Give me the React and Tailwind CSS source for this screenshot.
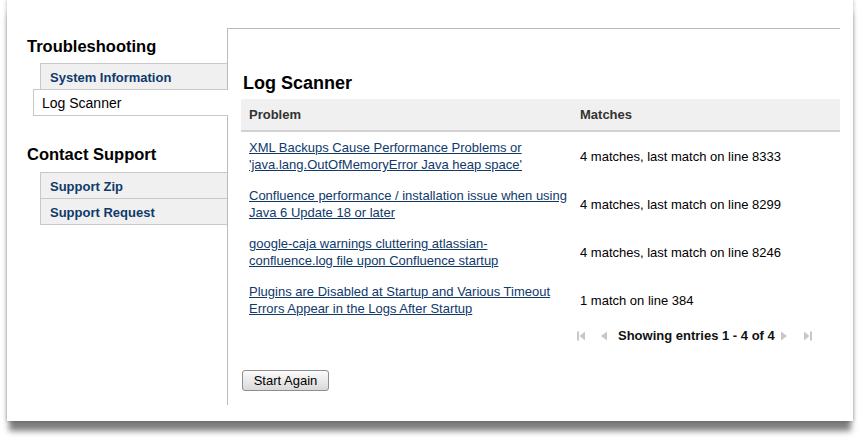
import React from "react";

const rows = [
  {
    title: "XML Backups Cause Performance Problems or 'java.lang.OutOfMemoryError Java heap space'",
    matches: "4 matches, last match on line 8333",
  },
  {
    title: "Confluence performance / installation issue when using Java 6 Update 18 or later",
    matches: "4 matches, last match on line 8299",
  },
  {
    title: "google-caja warnings cluttering atlassian-confluence.log file upon Confluence startup",
    matches: "4 matches, last match on line 8246",
  },
  {
    title: "Plugins are Disabled at Startup and Various Timeout Errors Appear in the Logs After Startup",
    matches: "1 match on line 384",
  },
];

function NavItem({ label, last }) {
  return (
    <div
      className={`ml-[33px] h-[26px] border-t border-l border-[#c8c8c8] bg-[#f0f0f0] pl-[9px] pt-[2px] text-[13px] leading-[23px] font-bold text-[#0f3a6b] ${
        last ? "h-[27px] border-b" : ""
      }`}
    >
      {label}
    </div>
  );
}

function PageIcon({ kind }) {
  const fill = "#c8c8c8";
  if (kind === "first")
    return (
      <svg width="8" height="10" viewBox="0 0 8 10">
        <rect x="0" y="0.5" width="2" height="9" fill={fill} />
        <polygon points="8,0.5 2.5,5 8,9.5" fill={fill} />
      </svg>
    );
  if (kind === "last")
    return (
      <svg width="8" height="10" viewBox="0 0 8 10">
        <polygon points="0,0.5 5.5,5 0,9.5" fill={fill} />
        <rect x="6" y="0.5" width="2" height="9" fill={fill} />
      </svg>
    );
  if (kind === "prev")
    return (
      <svg width="6" height="10" viewBox="0 0 6 10">
        <polygon points="6,0.5 0,5 6,9.5" fill={fill} />
      </svg>
    );
  return (
    <svg width="6" height="10" viewBox="0 0 6 10">
      <polygon points="0,0.5 6,5 0,9.5" fill={fill} />
    </svg>
  );
}

export default function App() {
  return (
    <div className="w-[865px] h-[445px] bg-white font-['Liberation_Sans',Arial,sans-serif] text-black">
      <div className="ml-[7px] w-[846px] h-[421px] bg-white flex shadow-[0_12px_6px_-2px_rgba(0,0,0,0.5),0_0_4px_rgba(0,0,0,0.3)]">
        {/* Sidebar */}
        <div className="w-[220px] shrink-0 pt-[36px]">
          <h3 className="pl-[20px] text-[16.5px] leading-[20px] font-bold">Troubleshooting</h3>
          <div className="mt-[7px]">
            <NavItem label="System Information" />
            <div className="relative z-10 ml-[26px] -mr-px h-[27px] border-t border-l border-b border-[#c8c8c8] bg-white pl-[8px] pt-[2px] text-[14px] leading-[23px]">
              Log Scanner
            </div>
          </div>
          <h3 className="mt-[28px] pl-[20px] text-[16.5px] leading-[20px] font-bold">Contact Support</h3>
          <div className="mt-[8px]">
            <NavItem label="Support Zip" />
            <NavItem label="Support Request" last />
          </div>
        </div>

        {/* Content */}
        <div className="mt-[28px] w-[613px] h-[377px] shrink-0 border-t border-l border-[#bcbcbc] pl-[13px] pt-[43px]">
          <h2 className="ml-[2px] text-[18px] leading-[22px] font-bold">Log Scanner</h2>
          <div className="mt-[5px] text-[13px]">
            <div className="grid grid-cols-[331px_1fr] h-[33px] bg-[#f0f0f0] border-b-2 border-[#d2d2d2] items-center font-bold text-[#333]">
              <div className="pl-[8px] leading-[16px]">Problem</div>
              <div className="pl-[8px] leading-[16px]">Matches</div>
            </div>
            {rows.map((r) => (
              <div key={r.matches + r.title} className="grid grid-cols-[331px_1fr] h-[48px] items-center">
                <div className="pl-[8px] pr-[4px] leading-[17px]">
                  <a href="#" className="text-[#0f3a6b] underline">
                    {r.title}
                  </a>
                </div>
                <div className="pl-[8px] leading-[17px]">{r.matches}</div>
              </div>
            ))}
            <div className="grid grid-cols-[331px_1fr] mt-[4px]">
              <div />
              <div className="flex items-center pl-[5px] h-[16px]">
                <PageIcon kind="first" />
                <span className="ml-[16px] flex">
                  <PageIcon kind="prev" />
                </span>
                <span className="ml-[11px] font-bold leading-[16px] text-[#111]">Showing entries 1 - 4 of 4</span>
                <span className="ml-[6px] flex">
                  <PageIcon kind="next" />
                </span>
                <span className="ml-[17px] flex">
                  <PageIcon kind="last" />
                </span>
              </div>
            </div>
            <button
              type="button"
              className="mt-[26px] ml-[1px] w-[87px] h-[21px] border border-[#8e8e8e] rounded-[3px] bg-gradient-to-b from-[#fbfbfb] to-[#d9d9d9] text-[13px] leading-[19px] text-black"
            >
              Start Again
            </button>
          </div>
        </div>
      </div>
    </div>
  );
}
